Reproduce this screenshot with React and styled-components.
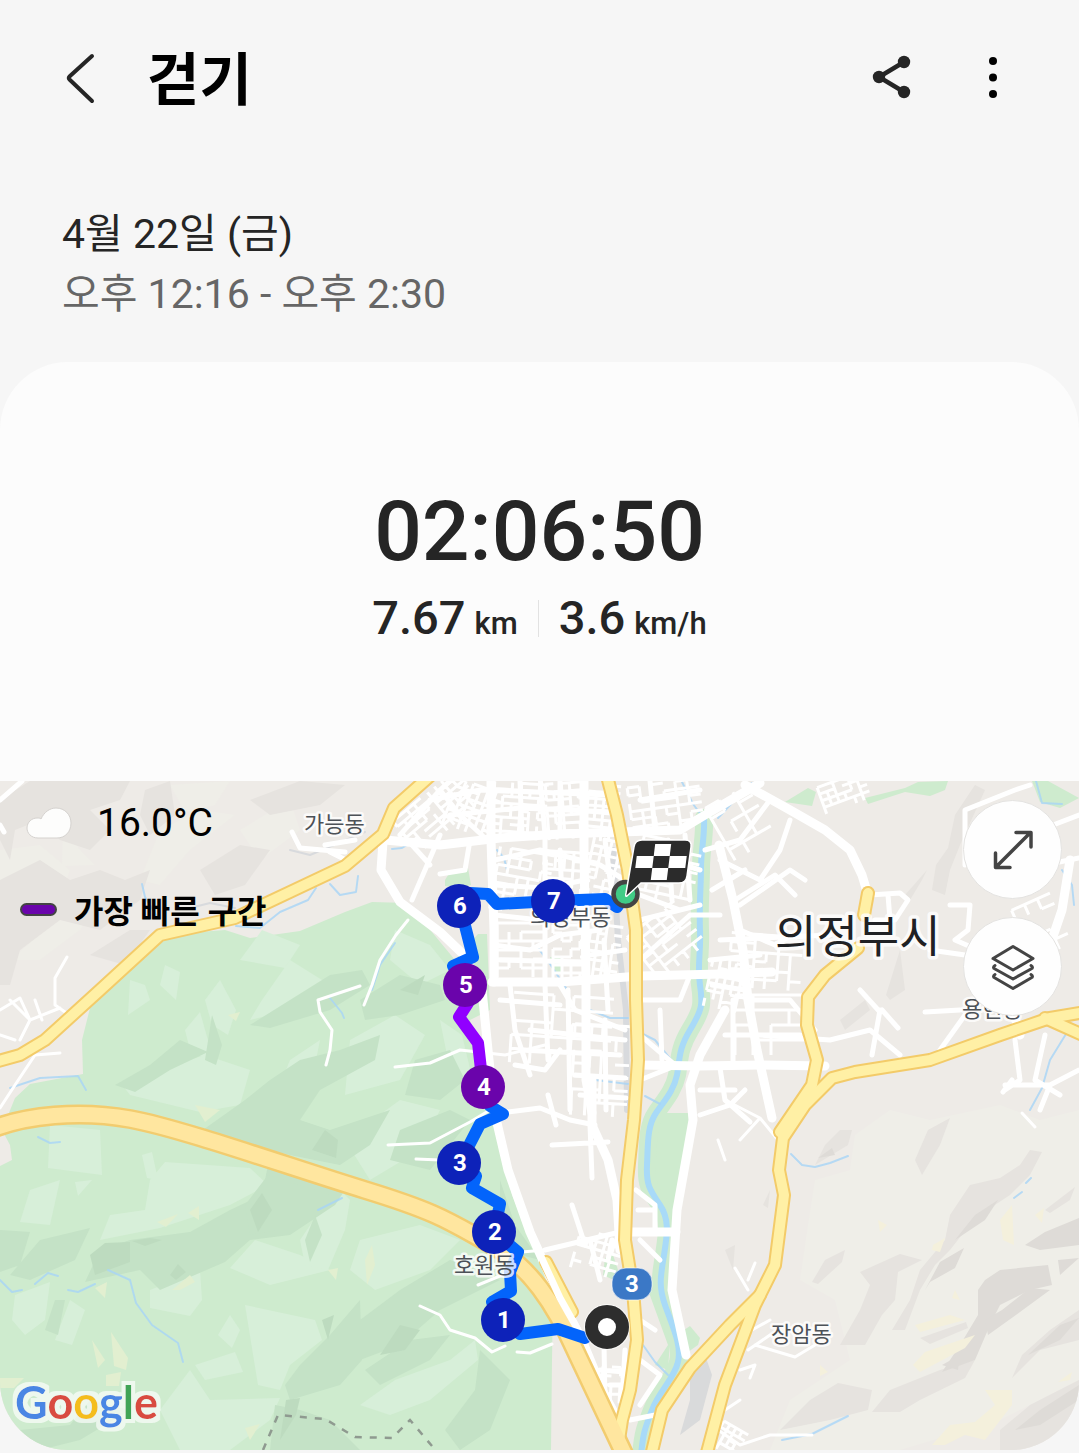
import styled, { createGlobalStyle } from "styled-components";

const GlobalStyle = createGlobalStyle`
  * {
    box-sizing: border-box;
  }
  body {
    margin: 0;
    background: #f6f6f6;
    color: #252525;
    font-family: Roboto, "Noto Sans CJK KR", sans-serif;
  }
`;

const Page = styled.div`
  width: 100%;
  padding-bottom: 3px;
  background: #f6f6f6;
`;

const Header = styled.header`
  display: flex;
  align-items: center;
  height: 156px;
  padding: 0 54px 0 50px;
`;

const IconButton = styled.button`
  display: flex;
  align-items: center;
  justify-content: center;
  width: 64px;
  height: 64px;
  padding: 0;
  border: none;
  background: transparent;
  cursor: pointer;
`;

const Title = styled.h1`
  flex: 1;
  margin: 0 0 0 33px;
  padding-top: 6px;
  font-size: 57px;
  line-height: 64px;
  font-weight: 700;
  color: #000;
`;

const Actions = styled.div`
  display: flex;
  gap: 38px;
`;

const DateBlock = styled.section`
  padding: 48px 62px 38px;
  font-size: 41px;
  line-height: 60px;
`;

const DateLine = styled.div`
  color: ${({ $muted }) => ($muted ? "#666" : "#252525")};
`;

const Card = styled.main`
  overflow: hidden;
  background: #fcfcfc;
  border-radius: 68px;
`;

const Summary = styled.section`
  display: flex;
  flex-direction: column;
  align-items: center;
  padding: 120px 24px 127px;
  font-weight: 500;
`;

const Duration = styled.div`
  font-size: 84px;
  line-height: 100px;
`;

const Stats = styled.div`
  display: flex;
  align-items: center;
  gap: 20px;
  margin-top: 6px;
`;

const Stat = styled.div`
  font-size: 47px;
  line-height: 60px;
`;

const Unit = styled.span`
  margin-left: 9px;
  font-size: 31px;
`;

const Divider = styled.div`
  width: 1px;
  height: 37px;
  margin-bottom: 6px;
  background: #e2e2e2;
`;

const MapPanel = styled.section`
  position: relative;
  background: #eeebe7;
`;

const MapCanvas = styled.svg`
  display: block;
  width: 100%;
  height: auto;
`;

const Legend = styled.div`
  position: absolute;
  top: 12px;
  left: 20px;
  display: flex;
  flex-direction: column;
  gap: 26px;
  color: #000;
`;

const LegendRow = styled.div`
  display: flex;
  align-items: center;
  height: 60px;
`;

const Temperature = styled.span`
  margin-left: 25px;
  font-size: 39px;
`;

const FastestLabel = styled.span`
  margin-left: 17px;
  font-size: 32px;
  font-weight: 700;
`;

const FastestSwatch = styled.span`
  width: 37px;
  height: 13px;
  border: 2px solid #444;
  border-radius: 7px;
  background: #6a04ab;
`;

const CloudIcon = styled.svg`
  margin-left: 6px;
`;

const MapControls = styled.div`
  position: absolute;
  top: 19px;
  right: 17px;
  display: flex;
  flex-direction: column;
  gap: 18px;
`;

const RoundButton = styled.button`
  display: flex;
  align-items: center;
  justify-content: center;
  width: 99px;
  height: 99px;
  padding: 0;
  border: 1px solid #e4e3e1;
  border-radius: 50%;
  background: #fefefe;
  cursor: pointer;
`;

const PlaceName = styled.text`
  font-family: "Noto Sans CJK KR", sans-serif;
  font-size: ${({ $city }) => ($city ? "45px" : "22px")};
  fill: ${({ $city }) => ($city ? "#202124" : "#4c5157")};
  stroke: rgba(255, 255, 255, 0.8);
  stroke-width: ${({ $city }) => ($city ? "7px" : "5px")};
  stroke-linejoin: round;
  paint-order: stroke;
`;

const PinNumber = styled.text`
  font-family: Roboto, sans-serif;
  font-size: 24px;
  font-weight: 700;
  fill: #fff;
  text-anchor: middle;
`;

const Wordmark = styled.text`
  font-family: Lato, sans-serif;
  font-size: 45px;
  font-weight: 700;
`;

const FOREST =
  "M225 930 L250 938 L300 931 L345 912 L372 902 L408 903 L455 960 L478 934 L487 934 L490 1010 L470 1020 L487 1080 L500 1125 L512 1195 L535 1250 L553 1300 L552 1360 L551 1450 L0 1450 L0 1166 L12 1160 L10 1145 L2 1130 L15 1098 L30 1084 L83 1074 L82 1040 L92 1000 L130 965 L160 935 Z";

// slopes inside the forest, light / shade / deep shade / bare ground
const forestShapes = [
  {
    fill: "#d7efd9",
    shapes: [
      "M130 980 L145 985 L150 1000 L128 1015 Z",
      "M165 965 L180 972 L176 1000 L160 985 Z",
      "M205 1000 L220 980 L236 1010 L228 1035 L212 1025 Z",
      "M240 960 L262 930 L300 945 L285 968 Z",
      "M262 1000 L290 960 L330 985 L290 1010 L250 1020 Z",
      "M120 1082 L205 1055 L250 1070 L240 1105 L200 1112 L130 1095 Z",
      "M185 1030 L200 1012 L215 1065 L190 1050 Z",
      "M50 1125 L100 1130 L102 1175 L48 1168 Z",
      "M30 1190 L60 1180 L50 1225 L20 1222 Z",
      "M75 1182 L92 1180 L78 1196 Z",
      "M142 1155 L152 1152 L158 1180 L147 1178 Z",
      "M165 1162 L250 1168 L268 1185 L230 1205 L160 1228 L100 1240 L110 1215 L145 1210 L150 1180 Z",
      "M230 1268 L255 1240 L300 1255 L330 1270 L270 1285 Z",
      "M150 1290 L200 1270 L202 1300 L190 1316 L150 1308 Z",
      "M15 1295 L50 1282 L45 1320 L25 1335 L12 1320 Z",
      "M55 1340 L70 1300 L85 1310 L72 1345 Z",
      "M245 1305 L315 1320 L322 1340 L290 1365 L280 1390 L258 1385 Z",
      "M195 1365 L235 1352 L243 1372 L205 1380 Z",
      "M218 1335 L230 1315 L240 1330 L232 1348 Z",
      "M160 1410 L190 1370 L210 1400 L280 1398 L270 1420 L230 1450 L180 1450 Z",
      "M300 1240 L315 1218 L330 1180 L350 1200 L345 1230 L328 1270 L305 1265 Z",
      "M360 1240 L420 1225 L460 1240 L430 1270 L375 1290 L350 1270 Z",
      "M350 1040 L395 1015 L425 1035 L400 1080 L345 1095 Z",
      "M345 1140 L400 1100 L440 1110 L420 1150 L370 1180 Z",
      "M360 1405 L395 1380 L450 1360 L475 1340 L478 1360 L430 1400 L390 1415 Z",
      "M395 930 L430 945 L450 970 L420 985 L390 960 Z",
      "M270 1110 L290 1060 L320 1040 L312 1080 L300 1115 Z",
      "M440 1020 L462 1035 L475 1090 L450 1070 Z",
    ],
  },
  {
    fill: "#c4e2c6",
    shapes: [
      "M250 1025 L290 1000 L330 975 L362 970 L370 985 L330 1010 L270 1028 Z",
      "M115 1085 L150 1065 L180 1040 L208 1052 L170 1070 L135 1092 Z",
      "M205 1060 L212 1015 L222 1045 L216 1065 Z",
      "M245 1100 L270 1080 L300 1060 L340 1050 L380 1035 L375 1060 L320 1090 L300 1120 L330 1130 L390 1110 L370 1145 L340 1165 L290 1155 L200 1132 Z",
      "M0 1230 L30 1232 L20 1265 L0 1272 Z",
      "M10 1275 L40 1240 L90 1228 L75 1260 L30 1280 Z",
      "M85 1282 L100 1250 L130 1240 L190 1232 L230 1210 L262 1195 L270 1155 L345 1190 L335 1205 L290 1235 L250 1240 L225 1262 L160 1290 L140 1270 Z",
      "M245 1205 L268 1175 L330 1195 L300 1210 L280 1230 L250 1235 Z",
      "M305 1240 L315 1215 L322 1235 L310 1262 Z",
      "M285 1385 L300 1365 L330 1335 L360 1300 L362 1360 L340 1385 L290 1400 Z",
      "M275 1405 L300 1410 L330 1420 L360 1450 L270 1450 Z",
      "M20 1430 L70 1425 L90 1400 L130 1410 L80 1440 L40 1450 Z",
      "M360 1320 L400 1290 L450 1260 L500 1280 L440 1310 L400 1345 L360 1360 Z",
      "M365 1370 L410 1340 L450 1335 L430 1360 L380 1385 Z",
      "M445 1430 L475 1390 L480 1350 L510 1380 L490 1430 L460 1450 Z",
      "M400 1130 L450 1110 L470 1120 L430 1170 L390 1160 Z",
      "M360 1000 L400 975 L440 985 L445 1000 L400 1015 L365 1020 Z",
      "M415 1060 L450 1050 L465 1080 L440 1100 L405 1095 Z",
      "M500 1180 L515 1225 L540 1260 L520 1255 L500 1220 Z",
      "M45 1330 L55 1300 L65 1300 L58 1335 Z",
    ],
  },
  {
    fill: "#bddbbf",
    shapes: [
      "M90 1255 L105 1243 L130 1242 L130 1262 L95 1275 Z",
      "M312 1150 L325 1130 L338 1140 L336 1158 Z",
      "M250 1210 L262 1193 L272 1210 L258 1232 Z",
      "M132 1241 L150 1238 L162 1240 L145 1246 Z",
      "M170 1275 L178 1264 L186 1272 L176 1280 Z",
      "M322 1320 L334 1315 L328 1340 Z",
      "M400 990 L425 975 L418 995 Z",
      "M380 1355 L400 1325 L420 1330 L405 1350 Z",
      "M286 1400 L300 1398 L296 1415 L280 1440 Z",
    ],
  },
  {
    fill: "#e2efd0",
    shapes: [
      "M157 1222 L178 1214 L166 1227 Z",
      "M188 1213 L199 1206 L199 1220 Z",
      "M95 1288 L107 1282 L105 1298 Z",
      "M111 1332 L128 1358 L126 1370 L114 1366 Z",
      "M92 1340 L105 1360 L98 1368 Z",
      "M106 1375 L121 1372 L119 1386 L106 1386 Z",
      "M228 1015 L240 1012 L236 1021 Z",
      "M195 1105 L220 1110 L205 1122 Z",
      "M172 1290 L190 1275 L195 1282 L180 1290 Z",
      "M328 1270 L338 1268 L336 1280 Z",
      "M245 1428 L260 1424 L250 1440 Z",
      "M365 1260 L372 1245 L375 1265 L367 1285 Z",
      "M0 1378 L24 1378 L14 1388 L0 1388 Z",
    ],
  },
];

const hillShapes = [
  {
    fill: "#efeee8",
    shapes: [
      "M815 1180 L850 1170 L855 1135 L890 1110 L930 1120 L1000 1105 L1040 1120 L1079 1110 L1079 1380 L1000 1420 L900 1450 L770 1450 L790 1400 L850 1360 L835 1300 L800 1280 L808 1225 Z",
      "M0 850 L40 845 L70 870 L60 900 L20 905 L0 930 Z",
      "M63 825 L80 850 L95 865 L62 866 Z",
      "M140 880 L160 830 L200 810 L235 815 L190 850 L160 885 Z",
      "M240 830 L290 800 L300 830 L260 860 Z",
      "M170 785 L230 781 L215 805 L185 812 Z",
      "M10 960 L50 925 L100 900 L80 930 L40 960 Z",
    ],
  },
  {
    fill: "#e6e3df",
    shapes: [
      "M30 781 L130 781 L120 800 L90 810 L110 830 L90 850 L60 840 L40 820 L15 830 L10 860 L0 840 L0 800 Z",
      "M145 790 L170 781 L175 815 L150 835 L140 815 Z",
      "M0 880 L40 860 L70 880 L100 870 L125 880 L150 870 L140 900 L100 930 L60 920 L20 950 L10 985 L0 985 Z",
      "M200 870 L240 845 L270 850 L245 885 L215 895 Z",
      "M250 800 L300 781 L345 785 L320 805 L270 815 Z",
      "M90 955 L130 930 L150 930 L125 965 Z",
      "M932 890 L936 865 L948 848 L955 815 L975 785 L985 790 L960 845 L950 870 L945 895 Z",
      "M886 995 L900 950 L905 990 L890 1000 Z",
      "M905 895 L927 870 L922 880 L910 900 Z",
      "M840 1020 L865 1000 L870 1010 L845 1030 Z",
      "M825 1145 L840 1130 L852 1130 L848 1145 L815 1165 Z",
      "M915 1160 L928 1130 L950 1118 L940 1145 L922 1175 Z",
      "M950 1215 L970 1185 L1000 1178 L1020 1165 L1030 1150 L1042 1152 L1030 1175 L1010 1195 L975 1218 L950 1250 L935 1265 L920 1290 L905 1330 L892 1330 L910 1300 L920 1270 L945 1240 Z",
      "M860 1272 L900 1254 L922 1260 L898 1272 L895 1300 L882 1315 L865 1345 L840 1345 L860 1310 L870 1285 Z",
      "M812 1282 L825 1260 L845 1250 L842 1262 L818 1284 Z",
      "M920 1338 L966 1322 L968 1328 L930 1344 Z",
      "M780 1430 L810 1400 L838 1383 L872 1390 L868 1410 L830 1420 Z",
      "M890 1390 L940 1370 L975 1360 L965 1378 L920 1400 L900 1412 L872 1412 Z",
      "M1022 1355 L1050 1330 L1079 1310 L1079 1340 L1040 1350 L1012 1378 Z",
      "M1000 1430 L1030 1405 L1079 1380 L1079 1450 L1000 1450 Z",
      "M1045 1210 L1075 1187 L1070 1200 L1050 1213 Z",
      "M763 1205 L770 1190 L768 1208 Z",
      "M725 1250 L735 1245 L733 1270 Z",
    ],
  },
  {
    fill: "#dedbd7",
    shapes: [
      "M1025 1245 L1045 1232 L1079 1218 L1079 1245 L1040 1250 Z",
      "M985 1280 L1000 1270 L1048 1265 L1052 1285 L1030 1290 L1000 1305 L990 1325 L975 1360 L942 1372 L960 1345 L978 1315 L978 1290 Z",
      "M1002 1310 L1030 1288 L1050 1290 L1020 1312 L988 1335 L985 1320 Z",
      "M1015 1430 L1040 1410 L1079 1385 L1079 1400 L1040 1425 Z",
      "M925 1290 L940 1262 L964 1248 L955 1268 L930 1282 Z",
      "M955 1240 L975 1215 L998 1200 L985 1220 Z",
      "M1028 1355 L1060 1325 L1079 1318 L1060 1340 Z",
      "M818 1158 L832 1148 L835 1155 Z",
      "M1058 1260 L1079 1258 L1060 1275 Z",
      "M942 1365 L960 1355 L958 1370 Z",
    ],
  },
  {
    fill: "#f4f0dc",
    shapes: [
      "M913 1365 L925 1352 L975 1335 L965 1348 L920 1372 Z",
      "M932 1445 L950 1425 L975 1422 L995 1405 L985 1390 L1012 1390 L1012 1405 L985 1440 L965 1435 L945 1445 Z",
      "M1000 1220 L1012 1205 L1014 1245 L1003 1240 Z",
      "M933 1245 L945 1238 L940 1252 L932 1250 Z",
      "M878 1220 L887 1225 L880 1232 Z",
      "M915 1325 L950 1315 L965 1320 L920 1332 Z",
      "M1035 1215 L1044 1208 L1042 1223 Z",
      "M820 1365 L828 1372 L820 1376 Z",
      "M955 1290 L960 1300 L952 1298 Z",
      "M1058 1382 L1072 1372 L1070 1380 Z",
    ],
  },
];

const parks = [
  "M445 880 L450 872 L468 868 L471 885 L460 888 L445 886 Z",
  "M550 957 L563 957 L563 973 L556 973 Z",
  "M785 802 L808 788 L816 792 L812 806 Z",
  "M865 798 L905 788 L918 782 L948 781 L945 790 L930 796 L905 792 L868 804 Z",
  "M1032 781 L1048 781 L1079 798 L1060 808 L1040 802 Z",
  "M605 1258 L613 1255 L618 1270 L620 1283 L603 1275 Z",
  "M662 1113 L694 1113 L683 1200 L675 1232 L670 1225 L652 1195 L650 1150 Z",
  "M648 1290 L658 1290 L670 1340 L668 1370 L655 1365 L668 1345 Z",
  "M684 1330 L690 1326 L700 1338 L698 1345 L688 1352 Z",
];

const RIVER =
  "M704 818 C705 835 701 850 701 868 S699 905 700 930 S697 965 700 985 S702 1010 690 1030 S680 1060 677 1075 S665 1100 656 1113 S648 1145 647 1165 S650 1190 660 1205 S667 1235 664 1255 S658 1285 665 1305 S682 1345 678 1362 S660 1390 652 1410 S643 1435 641 1455";

const streams = [
  "M680 778 L693 804 L705 820",
  "M718 818 L732 803 L752 783",
  "M392 849 L402 848 L412 842",
  "M497 850 L504 858 L507 870",
  "M538 948 L550 964 L566 988",
  "M590 1010 L610 1018 L628 1018",
  "M595 1080 L628 1084",
  "M641 1033 L655 1040 L676 1066",
  "M645 1096 L660 1104",
  "M236 926 L260 928 L280 912 L308 900 L316 888",
  "M142 884 L145 897 L158 918",
  "M330 998 L342 1013 L344 1018",
  "M10 1088 L40 1078 L78 1076 L86 1090",
  "M38 1137 L50 1143 L60 1142",
  "M0 1280 L12 1292 L22 1290 M35 1284 L48 1273 L58 1276",
  "M68 1290 L78 1292 L95 1284 M108 1270 L130 1280 L136 1303 L152 1325 L178 1343 L183 1362",
  "M318 1210 L342 1198",
  "M395 943 L380 965 L372 990",
  "M791 1154 L802 1165 L815 1167 L830 1163 L848 1156",
  "M1014 1198 L1022 1192 M1026 1183 L1031 1178",
  "M1066 1034 L1050 1060 L1042 1088 L1030 1110",
  "M1062 870 L1072 885 L1074 905",
  "M782 1440 L812 1434 L848 1416",
  "M643 1345 L655 1362 L668 1375",
  "M1036 781 L1042 803 L1062 804",
  "M330 884 L340 895 L356 892 L358 876",
];

const mainStreets = [
  "M383 842 L381 870 L400 902 L440 932 L464 955 L482 990 L487 1040 L494 1110 L508 1170 L530 1232 L560 1298 L582 1340 L605 1396 L618 1420",
  "M385 840 L440 845 L500 838 L560 834 L620 832 L680 830 L710 812 L760 783",
  "M492 982 L560 982 L640 976 L720 974 L772 972",
  "M491 776 L491 840 L494 930 L494 982",
  "M584 776 L584 850 L586 980 L586 1080 L592 1113",
  "M719 845 L733 900 L743 950 L748 1000 L757 1050 L772 1118",
  "M640 1065 L700 1066 L760 1065 L825 1066",
  "M725 1010 L700 1055 L690 1085 L693 1120 L677 1210 L672 1290 L686 1355",
  "M745 785 L790 810 L825 830 L850 850 L862 875 L868 895",
  "M592 1080 L592 1125 L608 1160 L617 1200 L620 1250",
  "M625 1232 L676 1232",
  "M1020 1035 L1010 1000 L1045 960 L1062 910 L1070 860",
];

const sideStreets = [
  "M440 835 L425 870 L412 900 M470 840 L465 870 L440 874 M412 845 L430 865",
  "M440 790 L460 815 L485 838 M400 835 L440 790 L450 781",
  "M540 776 L545 835 L545 980 M520 781 L522 835 M560 781 L560 835",
  "M495 860 L540 850 L600 865 L625 880 M494 945 L530 950 L560 935 L600 930",
  "M495 885 L545 888 L585 880 M495 915 L540 920 M560 850 L562 900 M585 905 L612 900 M605 840 L612 895",
  "M430 800 L480 790 L610 795 M450 815 L520 808 L612 812",
  "M604 940 L608 1010 M590 955 L625 950 M500 960 L585 962",
  "M510 985 L515 1030 L525 1060 L530 1075 M500 1000 L560 1005 M545 985 L548 1060 M560 985 L575 1010 L625 1030",
  "M520 1050 L620 1055 M515 1065 L545 1070 L560 1050 M568 990 L570 1110",
  "M575 1075 L625 1078 M580 1095 L626 1098 M605 1020 L606 1110 M530 1030 L625 1040",
  "M640 920 L700 905 M640 960 L690 915 L720 915 M640 1000 L680 1000 L690 975 M640 895 L680 910",
  "M650 781 L655 830 M640 800 L700 790 M636 850 L700 870 M668 840 L672 900 M685 835 L690 900",
  "M705 850 L740 840 L770 800 M712 890 L745 870 M740 905 L790 870 L805 880",
  "M640 1035 L675 1065 M640 1080 L675 1066 M660 1010 L662 1060",
  "M720 940 L830 935 M725 1035 L800 1035 M733 1000 L733 1065 M760 1035 L830 1040 L870 1030 L900 1055",
  "M720 860 L760 880 L780 850 L790 820 M735 900 L775 875 L795 895 M740 930 L775 945 L800 930",
  "M710 960 L760 955 M712 985 L745 990 M750 1000 L790 1000 L815 1030",
  "M700 1090 L735 1090 M720 1068 L725 1100 L750 1122 M700 1115 L730 1105 L745 1090",
  "M872 1055 L880 1010 M880 1012 L860 990 M882 1010 L898 1028 M925 1012 L960 1010 M940 1050 L965 1015",
  "M870 895 L900 893 L908 900 L895 920 L875 920 M888 895 L890 920",
  "M950 905 L970 905 L968 930 L955 940 L978 950 L1000 965 M930 950 L965 955",
  "M965 865 L965 810 L1015 790 L1030 785 M1040 830 L1079 815 M1045 865 L1079 858",
  "M1015 1040 L1020 1080 L1005 1090 M1045 1035 L1035 1080 L1060 1095 M1005 1085 L1050 1085 M1012 1080 L1003 1092 M1079 1070 L1050 1085 L1040 1110",
  "M500 1113 L540 1108 L570 1120 L595 1125 M548 1095 L556 1125 M552 1145 L608 1142 M590 1125 L592 1178",
  "M572 1205 L585 1245 M545 1250 L620 1232 M590 1240 L600 1280 M612 1240 L608 1260",
  "M636 1190 L655 1205 L655 1230 M638 1210 L655 1210 M640 1240 L660 1260",
  "M604 1345 L605 1400 M625 1350 L622 1400 M600 1370 L625 1372 M610 1385 L622 1385 M640 1360 L660 1375 L640 1405 M630 1420 L655 1415 M640 1320 L655 1330",
  "M0 800 L22 781 M0 825 L4 832",
  "M292 832 L300 848 L345 852 M330 852 L350 862 M325 845 L355 840",
];

const lanes = [
  "M67 957 L55 978 L55 1005 L65 1012 M0 1010 L20 998 L30 1020 L60 1008 M20 1040 L30 1020 L10 1000 M0 1035 L15 1040 M35 1000 L42 1020",
  "M0 1108 L15 1085 L35 1055 L60 1053",
  "M360 986 L318 1000 L320 1012 L332 1030 L330 1050 L326 1065",
  "M408 920 L396 935 L380 960 L372 985 L364 1005",
  "M388 1145 L430 1143 L470 1122 L490 1110 M416 1159 L440 1160",
  "M395 1067 L430 1063 L460 1050 L505 1055 L545 1045",
  "M420 1306 L440 1315 L450 1330 L475 1338 L492 1352 L505 1346 M517 1352 L530 1353 L552 1344",
  "M478 1285 L510 1272 M522 1252 L545 1250",
  "M740 1140 L760 1118 L778 1140 M725 1100 L760 1118 M718 1140 L725 1160",
  "M735 1268 L748 1290 M755 1263 L748 1280",
  "M752 1330 L770 1320 M755 1345 L795 1357 L815 1345 M748 1350 L770 1335",
  "M740 1370 L755 1365 L750 1378",
  "M718 1430 L740 1445 L770 1435 L812 1435 M725 1410 L740 1400",
  "M1022 1113 L1035 1127",
];

const yellowRoads = [
  "M-5 1062 L20 1055 L45 1040 L100 990 L160 935 L235 918 L290 892 L345 866 L383 834 L394 808 L430 776",
  "M607 776 L617 815 L628 870 L636 930 L636 1000 L638 1060 L634 1120 L627 1180 L625 1240 L633 1290 L637 1340 L630 1390 L622 1420 L619 1440",
  "M868 893 L864 915",
  "M858 948 L825 975 L808 997 L807 1025 L817 1060 L812 1085 L780 1132",
  "M1085 1012 L1050 1018 L1000 1035 L930 1060 L855 1072 L832 1078 L805 1105 L783 1138 L779 1170 L784 1195 L775 1265 L755 1305 L725 1385 L705 1460",
  "M1045 1018 L1085 1036",
  "M760 1295 L730 1325 L690 1368 L662 1410 L650 1460",
  "M546 1262 L572 1312",
];

const HIGHWAY =
  "M-10 1130 C25 1115 80 1110 130 1119 S290 1167 365 1190 S450 1222 490 1244 S555 1305 575 1350 L628 1462";

const route = [
  {
    color: "#0364fb",
    d: "M585 1338 L558 1329 L520 1334 L503 1320 L492 1302 L511 1291 L510 1272 L518 1252 L494 1232 L500 1204 L472 1188 L476 1176 L460 1163 L480 1124 L503 1114 L490 1106 L483 1087",
  },
  { color: "#9100ff", d: "M483 1087 L478 1043 L459 1017 L468 1003 L465 985" },
  {
    color: "#0364fb",
    d: "M465 985 L453 966 L473 957 L460 906 L470 893 L488 894 L497 904 L553 901 L605 899 L617 907 L626 894",
  },
];

const places = [
  { name: "가능동", x: 304, y: 832 },
  { name: "의정부동", x: 530, y: 925 },
  { name: "호원동", x: 454, y: 1273 },
  { name: "장암동", x: 771, y: 1342 },
  { name: "용현동", x: 962, y: 1017 },
  { name: "의정부시", x: 775, y: 953, city: true },
];

const pins = [
  { km: 7, x: 553, y: 901 },
  { km: 6, x: 459, y: 906 },
  { km: 5, x: 465, y: 985, fastest: true },
  { km: 4, x: 483, y: 1087, fastest: true },
  { km: 3, x: 459, y: 1163 },
  { km: 2, x: 494, y: 1232 },
  { km: 1, x: 503, y: 1320 },
];

// built-up areas: centre, size, rotation and block size
const blocks = [
  { x: 432, y: 812, w: 72, h: 36, angle: -40, gx: 9, gy: 7 },
  { x: 470, y: 806, w: 40, h: 44, angle: 20, gx: 8, gy: 8 },
  { x: 516, y: 808, w: 46, h: 50, angle: 4, gx: 9, gy: 7 },
  { x: 565, y: 808, w: 36, h: 50, angle: -4, gx: 8, gy: 8 },
  { x: 600, y: 810, w: 26, h: 50, angle: 5, gx: 8, gy: 7 },
  { x: 665, y: 806, w: 70, h: 46, angle: -8, gx: 12, gy: 8 },
  { x: 518, y: 880, w: 46, h: 60, angle: 10, gx: 11, gy: 9 },
  { x: 565, y: 882, w: 40, h: 60, angle: 4, gx: 9, gy: 9 },
  { x: 605, y: 870, w: 34, h: 60, angle: 12, gx: 9, gy: 8 },
  { x: 520, y: 950, w: 46, h: 54, angle: 0, gx: 12, gy: 9 },
  { x: 568, y: 950, w: 30, h: 50, angle: 0, gx: 9, gy: 8 },
  { x: 603, y: 950, w: 30, h: 50, angle: 8, gx: 8, gy: 9 },
  { x: 665, y: 868, w: 54, h: 56, angle: 12, gx: 12, gy: 9 },
  { x: 662, y: 942, w: 50, h: 50, angle: -38, gx: 12, gy: 9 },
  { x: 552, y: 1025, w: 80, h: 60, angle: 4, gx: 20, gy: 14 },
  { x: 598, y: 1065, w: 50, h: 80, angle: 3, gx: 14, gy: 13 },
  { x: 735, y: 820, w: 40, h: 50, angle: -30, gx: 16, gy: 12 },
  { x: 840, y: 792, w: 40, h: 24, angle: -20, gx: 8, gy: 7 },
  { x: 765, y: 960, w: 70, h: 50, angle: 4, gx: 12, gy: 9 },
  { x: 726, y: 985, w: 36, h: 46, angle: 12, gx: 8, gy: 8 },
  { x: 765, y: 1020, w: 60, h: 50, angle: 0, gx: 18, gy: 15 },
  { x: 594, y: 1250, w: 36, h: 34, angle: 16, gx: 9, gy: 8 },
  { x: 1040, y: 925, w: 40, h: 50, angle: -24, gx: 14, gy: 11 },
  { x: 613, y: 1385, w: 22, h: 36, angle: 3, gx: 9, gy: 9 },
  { x: 728, y: 1436, w: 22, h: 22, angle: 30, gx: 7, gy: 7 },
];

// street grid with some of its segments left out, always the same ones
const blockPath = ({ w, h, gx, gy }, seed) => {
  let n = seed * 7919 + 13;
  const next = () => {
    n = (n * 1103515245 + 12345) % 2147483648;
    return n / 2147483648;
  };
  let d = "";
  for (let x = -w / 2; x <= w / 2; x += gx) {
    for (let y = -h / 2; y < h / 2; y += gy) {
      if (next() > 0.3) d += `M${x} ${y}v${gy}`;
      if (next() > 0.28) d += `M${x} ${y}h${gx}`;
    }
  }
  return d;
};

const Lines = ({ paths, color, width, opacity }) => (
  <g
    fill="none"
    stroke={color}
    strokeWidth={width}
    strokeLinecap="round"
    strokeLinejoin="round"
    opacity={opacity}
  >
    {paths.map((d) => (
      <path key={d} d={d} />
    ))}
  </g>
);

const Shapes = ({ groups }) =>
  groups.map(({ fill, shapes }) => (
    <g key={fill} fill={fill}>
      {shapes.map((d) => (
        <path key={d} d={d} />
      ))}
    </g>
  ));

const RouteMap = () => (
  <MapCanvas viewBox="0 781 1079 669" role="img" aria-label="걷기 경로 지도">
    <defs>
      <filter id="halo" x="-10%" y="-20%" width="120%" height="140%">
        <feMorphology in="SourceAlpha" operator="dilate" radius="4" result="spread" />
        <feGaussianBlur in="spread" stdDeviation="0.6" result="soft" />
        <feFlood floodColor="#fff" floodOpacity="0.65" />
        <feComposite in2="soft" operator="in" result="glow" />
        <feMerge>
          <feMergeNode in="glow" />
          <feMergeNode in="SourceGraphic" />
        </feMerge>
      </filter>
    </defs>
    <rect x="0" y="781" width="1079" height="669" fill="#eeebe7" />
    <Shapes groups={hillShapes} />
    <path d={FOREST} fill="#ceebce" />
    <Shapes groups={forestShapes} />
    <g fill="#ceebce">
      {parks.map((d) => (
        <path key={d} d={d} />
      ))}
    </g>
    <path d="M690 1365 L705 1355 L712 1375 L700 1420 L680 1435 L690 1400 Z" fill="#d9dadb" />
    <path d="M480 990 L488 1005 L487 1040 L484 1050 Z" fill="#fff" />
    <Lines paths={["M613 850 L618 940 L626 1010 L627 1110"]} color="#d8dadd" width="6" />
    <Lines paths={["M290 850 L310 855 L365 832", "M190 908 L210 903 L235 908"]} color="#d8dadd" width="2" />
    <Lines paths={[RIVER]} color="#ceebce" width="18" />
    <Lines paths={[RIVER]} color="#a8daf8" width="6" />
    <Lines paths={streams} color="#a8d5f7" width="2" opacity="0.8" />
    <g fill="none" stroke="#fff" strokeWidth="3">
      {blocks.map((block, i) => (
        <path
          key={`${block.x}-${block.y}`}
          d={blockPath(block, i + 1)}
          transform={`translate(${block.x} ${block.y}) rotate(${block.angle})`}
        />
      ))}
    </g>
    <Lines paths={lanes} color="#fff" width="3" />
    <Lines paths={sideStreets} color="#fff" width="5" />
    <Lines paths={mainStreets} color="#fff" width="9" />
    <Lines paths={yellowRoads} color="#f3cb69" width="14" />
    <Lines paths={[HIGHWAY]} color="#f2cc6f" width="20" />
    <Lines paths={yellowRoads} color="#fff0a5" width="10" />
    <Lines paths={[HIGHWAY]} color="#ffe69f" width="15" />
    <Lines paths={["M538 1250 L560 1298 L578 1330"]} color="#fff" width="7" />
    <path
      d="M263 1450 L278 1415 L325 1419 L355 1437 L392 1438 L410 1420 L432 1446"
      fill="none"
      stroke="#8f9a90"
      strokeWidth="2.5"
      strokeDasharray="7 8"
    />
    {route.map(({ d, color }) => (
      <Lines key={d} paths={[d]} color={color} width="12" />
    ))}
    {places.map(({ name, x, y, city }) => (
      <PlaceName key={name} x={x} y={y} $city={city}>
        {name}
      </PlaceName>
    ))}
    <g>
      <rect x="612" y="1268" width="40" height="32" rx="14" fill="#3b78c6" stroke="#fff" strokeOpacity="0.6" />
      <PinNumber x="632" y="1292">3</PinNumber>
    </g>
    {pins.map(({ km, x, y, fastest }) => (
      <g key={km}>
        <circle cx={x} cy={y} r="22" fill={fastest ? "#6a04ab" : "#0d22b9"} />
        <PinNumber x={x + 1} y={y + 8}>
          {km}
        </PinNumber>
      </g>
    ))}
    <g>
      <circle cx="607" cy="1327" r="23" fill="#fff" opacity="0.7" />
      <circle cx="607" cy="1327" r="15.5" fill="#fff" stroke="#2d2d2d" strokeWidth="13" />
    </g>
    <g>
      <circle cx="625.5" cy="894" r="12" fill="#40cb86" stroke="#444" strokeWidth="4.5" />
      <path
        d="M642 840 H685 Q692 840 691 847 L687 876 Q686 883 679 883 H641 L627 896 Q625 897 626 893 L634 847 Q635 840 642 840 Z"
        fill="#2b2b2b"
        stroke="#fff"
        strokeWidth="1.5"
      />
      <g transform="translate(661 862) skewX(-7)" fill="#fff">
        <rect x="-8" y="-18" width="16" height="12" />
        <rect x="-25" y="-6" width="17" height="12" />
        <rect x="8" y="-6" width="17" height="12" />
        <rect x="-8" y="6" width="16" height="12" />
      </g>
    </g>
    <Wordmark x="15" y="1419" filter="url(#halo)">
      <tspan fill="#4a86e4">G</tspan>
      <tspan fill="#d94b3f">o</tspan>
      <tspan fill="#f4bd1c">o</tspan>
      <tspan fill="#4a86e4">g</tspan>
      <tspan fill="#3fa456">l</tspan>
      <tspan fill="#d94b3f">e</tspan>
    </Wordmark>
  </MapCanvas>
);

const App = () => (
  <Page>
    <GlobalStyle />
    <Header>
      <IconButton aria-label="뒤로">
        <svg width="40" height="56" viewBox="0 0 40 56" fill="none">
          <path
            d="M30 6 L7.500 26.500 Q6 28 7.500 29.500 L30 51"
            stroke="#252525"
            strokeWidth="4"
            strokeLinecap="round"
          />
        </svg>
      </IconButton>
      <Title>걷기</Title>
      <Actions>
        <IconButton aria-label="공유">
          <svg width="44" height="48" viewBox="0 0 44 48" fill="#252525">
            <path d="M35 8 L10 23 L35 38" fill="none" stroke="#252525" strokeWidth="4.5" />
            <circle cx="35" cy="8" r="6.200" />
            <circle cx="10" cy="23" r="6.200" />
            <circle cx="35" cy="38" r="6.200" />
          </svg>
        </IconButton>
        <IconButton aria-label="더보기">
          <svg width="12" height="44" viewBox="0 0 12 44" fill="#000">
            <circle cx="6" cy="5" r="4" />
            <circle cx="6" cy="21.500" r="4" />
            <circle cx="6" cy="38" r="4" />
          </svg>
        </IconButton>
      </Actions>
    </Header>
    <DateBlock>
      <DateLine>4월 22일 (금)</DateLine>
      <DateLine $muted>오후 12:16 - 오후 2:30</DateLine>
    </DateBlock>
    <Card>
      <Summary>
        <Duration>02:06:50</Duration>
        <Stats>
          <Stat>
            7.67<Unit>km</Unit>
          </Stat>
          <Divider />
          <Stat>
            3.6<Unit>km/h</Unit>
          </Stat>
        </Stats>
      </Summary>
      <MapPanel>
        <RouteMap />
        <Legend>
          <LegendRow>
            <CloudIcon width="46" height="34" viewBox="0 0 46 34">
              <path
                d="M12 32 C5 32 1 27 1 22 C1 16 6 12 11 12 C13 12 14 12 15 13 C18 6 24 2 30 2 C39 2 45 9 45 17 C45 26 39 32 31 32 Z"
                fill="#fdfdfc"
                stroke="#d5d2cf"
              />
            </CloudIcon>
            <Temperature>16.0°C</Temperature>
          </LegendRow>
          <LegendRow>
            <FastestSwatch />
            <FastestLabel>가장 빠른 구간</FastestLabel>
          </LegendRow>
        </Legend>
        <MapControls>
          <RoundButton aria-label="지도 확대">
            <svg
              width="48"
              height="48"
              viewBox="0 0 48 48"
              fill="none"
              stroke="#444"
              strokeWidth="3.5"
              strokeLinecap="round"
              strokeLinejoin="round"
            >
              <path d="M7 41 L41 7 M27 6.500 H42 V21 M6.500 27 V41.500 H21" />
            </svg>
          </RoundButton>
          <RoundButton aria-label="지도 레이어">
            <svg
              width="48"
              height="48"
              viewBox="0 0 48 48"
              fill="none"
              stroke="#444"
              strokeWidth="3"
              strokeLinecap="round"
              strokeLinejoin="round"
            >
              <path d="M24 3.500 L44 15.500 L24 27 L4 15.500 Z" />
              <path d="M6 22.500 Q3 24.500 6 26 L24 36 L42 26 Q45 24.500 42 22.500" />
              <path d="M6 31.500 Q3 33.500 6 35 L24 45.500 L42 35 Q45 33.500 42 31.500" />
            </svg>
          </RoundButton>
        </MapControls>
      </MapPanel>
    </Card>
  </Page>
);

export default App;
